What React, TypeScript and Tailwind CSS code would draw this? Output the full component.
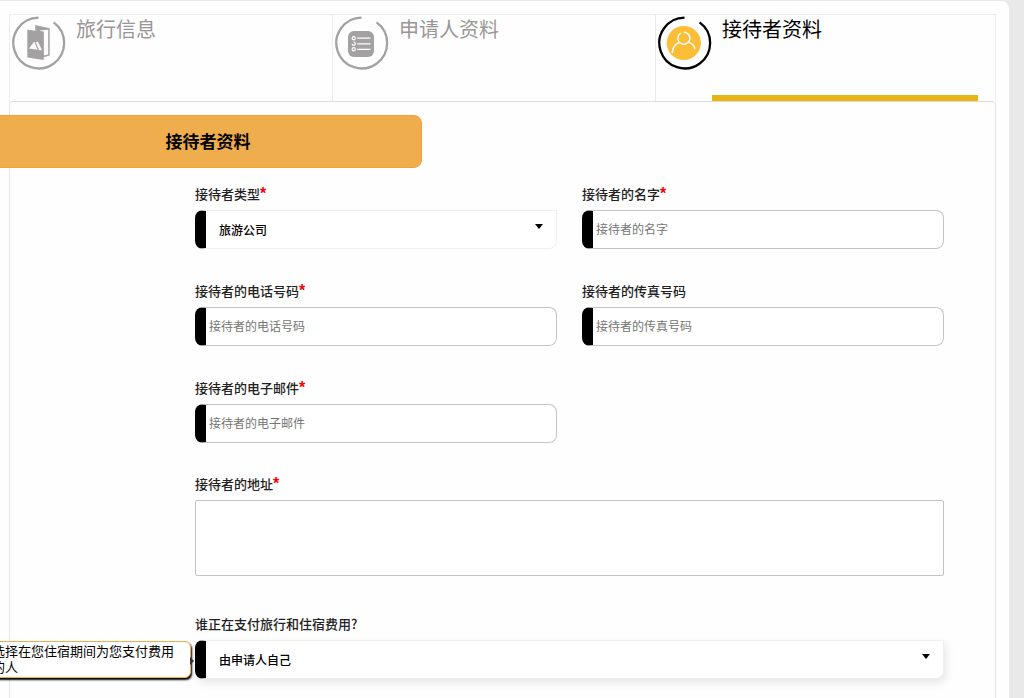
import type { ReactNode } from 'react';

function Ring({ color, children }: { color: string; children: ReactNode }) {
  return (
    <svg className={`size-14 shrink-0 ${color}`} viewBox="0 0 56 56" fill="none" aria-hidden="true">
      <path d="M28.5 2.6 A25.4 25.4 0 1 0 43.6 7.4" stroke="currentColor" strokeWidth="2.3" />
      {children}
    </svg>
  );
}

function BrochureIcon() {
  return (
    <Ring color="text-[#a3a1a1]">
      <path d="M25.2 15.6 V10 L39.7 13.2 V40.6 L33 42.4 V17 Z" fill="currentColor" />
      <path d="M29.5 15.4 L38.2 14.8 V39.4 L33.6 40.6 V17.2 Z" fill="#ffffff" />
      <path d="M17.3 14.8 L33.7 16.6 V45 L17.3 42.6 Z" fill="currentColor" />
      <path d="M19 33.6 L24.3 26.6 L27.6 34.8 Z" fill="#ffffff" />
      <path d="M25.8 27 L28 26.8 L32 35.2 L29 35 Z" fill="#ffffff" />
    </Ring>
  );
}

function ListIcon() {
  return (
    <Ring color="text-[#a3a1a1]">
      <rect x="15" y="16" width="26" height="26" rx="6" fill="currentColor" />
      <g stroke="#ffffff" strokeWidth="1.2">
        <circle cx="20.7" cy="23.2" r="1.6" />
        <path d="M20.7 27.2 A1.6 1.6 0 1 1 19.1 28.8" />
        <circle cx="20.7" cy="34.3" r="1.6" />
        <path d="M24.2 23.2 H37.5 M24.2 28.8 H37.5 M24.2 34.3 H37.5" />
      </g>
    </Ring>
  );
}

function PersonIcon() {
  return (
    <Ring color="text-black">
      <circle cx="27.8" cy="28" r="17.1" fill="#fcbd37" />
      <g stroke="#ffffff" strokeWidth="1.5" strokeLinecap="round">
        <path d="M28.4 17.3 A6 6 0 1 1 24.4 18.4" />
        <path d="M16.3 37.4 C16.8 32.2 19.2 29.2 22.9 27.6" />
        <path d="M33.3 27.6 C36.4 28.6 38.2 30.5 38.9 33.6" />
      </g>
    </Ring>
  );
}

function Tab({ icon, title, active = false }: { icon: ReactNode; title: string; active?: boolean }) {
  return (
    <button
      type="button"
      role="tab"
      aria-selected={active}
      className="flex border-l border-[#ececec] text-left"
    >
      {icon}
      <span
        className={`h-full flex-1 pl-2.5 text-xl leading-7 ${
          active ? 'border-b-6 border-[#e8b416] text-black' : 'text-[#9a9696]'
        }`}
      >
        {title}
      </span>
    </button>
  );
}

function Label({ id, children, required = false }: { id: string; children: string; required?: boolean }) {
  return (
    <label htmlFor={id} className="mb-[7px] block h-[18px] text-[13px] leading-[18px] font-medium text-[#222]">
      {children}
      {required && (
        <span className="font-['Liberation_Sans',sans-serif] text-base leading-none font-bold text-[#f80000]">*</span>
      )}
    </label>
  );
}

function TextField({ id, label, type = 'text', required = false }: { id: string; label: string; type?: string; required?: boolean }) {
  return (
    <div>
      <Label id={id} required={required}>{label}</Label>
      <input
        id={id}
        type={type}
        placeholder={label}
        required={required}
        className="block h-[39px] w-full rounded-lg border border-l-11 border-[#c4c4c4] border-l-black bg-white px-[3px] pb-0.5 text-xs text-black placeholder:text-[#757575]"
      />
    </div>
  );
}

function SelectField({
  id,
  label,
  options,
  required = false,
  raised = false,
  children,
}: {
  id: string;
  label: string;
  options: string[];
  required?: boolean;
  raised?: boolean;
  children?: ReactNode;
}) {
  return (
    <div>
      <Label id={id} required={required}>{label}</Label>
      <div className="relative">
        <select
          id={id}
          required={required}
          className={`block h-[39px] w-full appearance-none rounded-lg rounded-tr-none border border-l-11 border-[#efefef] border-l-black bg-white px-[13px] text-xs font-medium text-black ${
            raised ? 'shadow-[2px_4px_8px_rgba(0,0,0,0.1)]' : ''
          }`}
        >
          {options.map((option) => (
            <option key={option}>{option}</option>
          ))}
        </select>
        <svg className="pointer-events-none absolute top-3.5 right-3.5 h-[5px] w-2" viewBox="0 0 8 5" aria-hidden="true">
          <path d="M0 0 H8 L4 5 Z" fill="#000000" />
        </svg>
        {children}
      </div>
    </div>
  );
}

export default function App() {
  return (
    <div
      lang="zh-CN"
      className="flex min-h-screen flex-col overflow-hidden bg-[#e9e9e9] pt-px pr-[15px] font-['Noto_Sans_CJK_SC',sans-serif]"
    >
      <main className="flex flex-1 flex-col rounded-tr-lg bg-[#fefefe] px-[9px] pt-[13px] pr-[13px]">
        <div role="tablist" className="grid h-[87px] grid-cols-3 border-t border-r border-[#ececec] pr-[17px]">
          <Tab icon={<BrochureIcon />} title="旅行信息" />
          <Tab icon={<ListIcon />} title="申请人资料" />
          <Tab icon={<PersonIcon />} title="接待者资料" active />
        </div>

        <section className="flex-1 rounded-t-sm border border-b-0 border-[#e6e6e6] border-t-[#dcdcdc] pt-[13px]">
          <h2 className="-ml-24 w-[508px] rounded-lg border border-[#eea236] bg-[#f0ad4e] pt-px pb-[3px] pl-20 text-center text-[17px] leading-[47px] font-bold text-black">
            接待者资料
          </h2>

          <form className="pt-[17px] pr-[51px] pl-[185px]">
            <div className="grid grid-cols-2 gap-x-[25px] gap-y-[33px]">
              <SelectField id="host-type" label="接待者类型" options={['旅游公司']} required />
              <TextField id="host-name" label="接待者的名字" required />
              <TextField id="host-phone" label="接待者的电话号码" type="tel" required />
              <TextField id="host-fax" label="接待者的传真号码" type="tel" />
              <TextField id="host-email" label="接待者的电子邮件" type="email" required />
            </div>

            <div className="mt-8">
              <Label id="host-address" required>接待者的地址</Label>
              <textarea
                id="host-address"
                required
                className="block h-[76px] w-full resize-none rounded-xs border border-[#c4c4c4] bg-white p-2 text-xs"
              />
            </div>

            <div className="mt-[39px]">
              <SelectField id="payer" label="谁正在支付旅行和住宿费用?" options={['由申请人自己']} raised>
                <div
                  role="tooltip"
                  className="absolute top-px right-full mr-1 w-[206px] rounded-md border border-[#f0ad4e] bg-white px-1.5 pt-px pb-0.5 text-[13px] leading-4 text-black shadow-[1px_2px_2px_#000000]"
                >
                  选择在您住宿期间为您支付费用的人
                  <svg className="absolute top-[15px] left-full h-2 w-1" viewBox="0 0 4 8" aria-hidden="true">
                    <path d="M0 0 L4 4 L0 8 Z" fill="#333333" />
                  </svg>
                </div>
              </SelectField>
            </div>
          </form>
        </section>
      </main>
    </div>
  );
}
